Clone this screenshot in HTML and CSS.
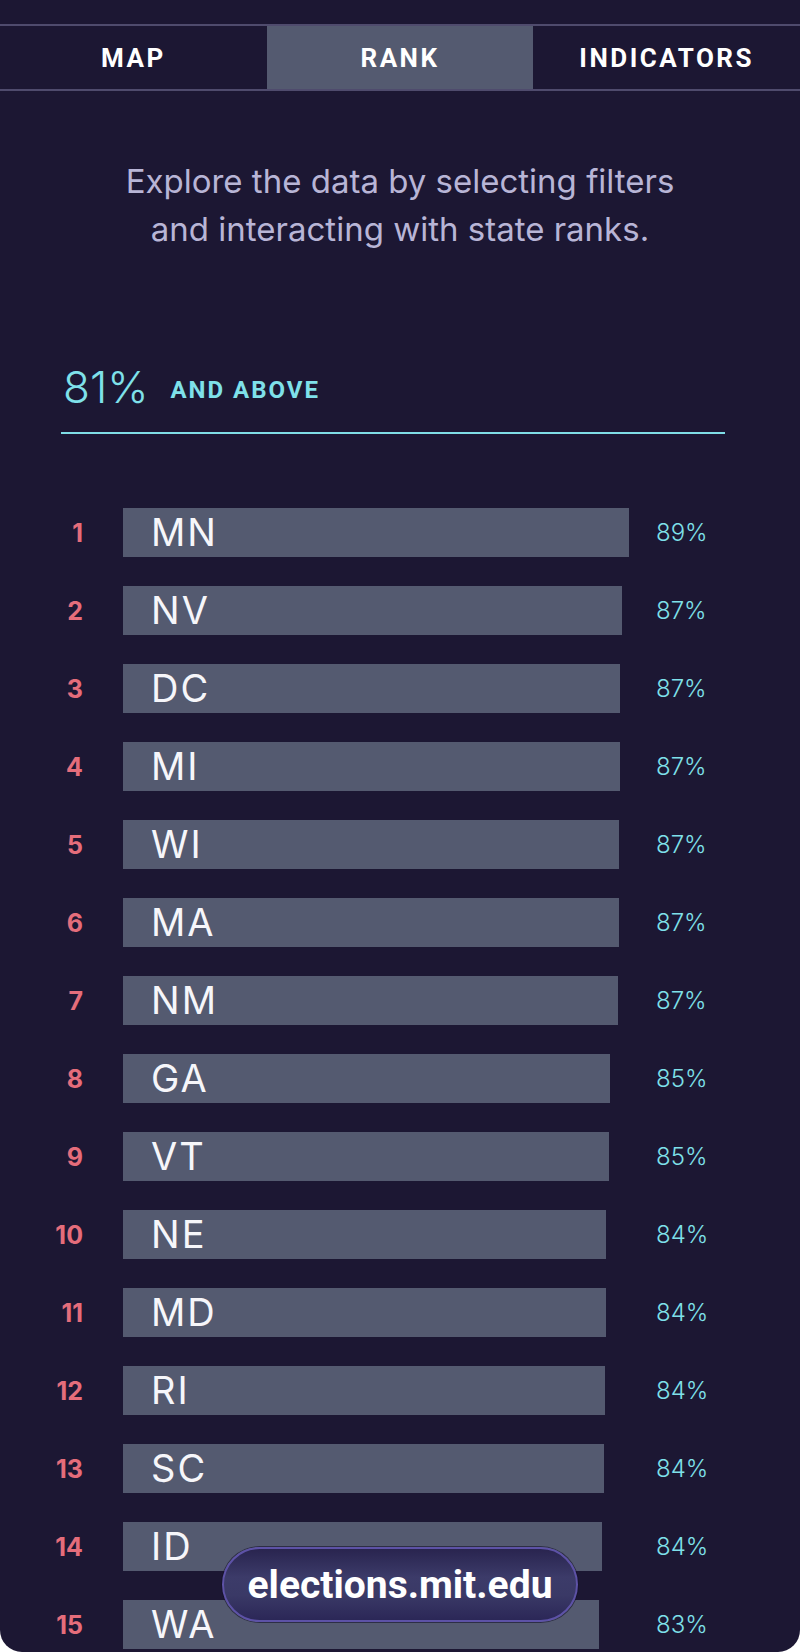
FILE: index.html
```html
<!DOCTYPE html>
<html lang="en">
<head>
    <meta charset="UTF-8">
    <meta name="viewport" content="width=device-width, initial-scale=1.0">
    <title>Rank</title>
    <link rel="stylesheet" href="styles.css">
</head>
<body>
    <div class="page">
        <nav class="tabs">
            <a class="tab">MAP</a>
            <a class="tab active">RANK</a>
            <a class="tab">INDICATORS</a>
        </nav>

        <p class="intro">Explore the data by selecting filters<br>and interacting with state ranks.</p>

        <h2 class="group-head"><span class="group-pct">81%</span><span class="group-label">AND ABOVE</span></h2>

        <ol class="rank-list">
            <li class="row"><span class="rank">1</span><div class="track"><div class="bar" style="width: 506px;">MN</div></div><span class="pct">89%</span></li>
            <li class="row"><span class="rank">2</span><div class="track"><div class="bar" style="width: 499px;">NV</div></div><span class="pct">87%</span></li>
            <li class="row"><span class="rank">3</span><div class="track"><div class="bar" style="width: 497px;">DC</div></div><span class="pct">87%</span></li>
            <li class="row"><span class="rank">4</span><div class="track"><div class="bar" style="width: 497px;">MI</div></div><span class="pct">87%</span></li>
            <li class="row"><span class="rank">5</span><div class="track"><div class="bar" style="width: 496px;">WI</div></div><span class="pct">87%</span></li>
            <li class="row"><span class="rank">6</span><div class="track"><div class="bar" style="width: 496px;">MA</div></div><span class="pct">87%</span></li>
            <li class="row"><span class="rank">7</span><div class="track"><div class="bar" style="width: 495px;">NM</div></div><span class="pct">87%</span></li>
            <li class="row"><span class="rank">8</span><div class="track"><div class="bar" style="width: 487px;">GA</div></div><span class="pct">85%</span></li>
            <li class="row"><span class="rank">9</span><div class="track"><div class="bar" style="width: 486px;">VT</div></div><span class="pct">85%</span></li>
            <li class="row"><span class="rank">10</span><div class="track"><div class="bar" style="width: 483px;">NE</div></div><span class="pct">84%</span></li>
            <li class="row"><span class="rank">11</span><div class="track"><div class="bar" style="width: 483px;">MD</div></div><span class="pct">84%</span></li>
            <li class="row"><span class="rank">12</span><div class="track"><div class="bar" style="width: 482px;">RI</div></div><span class="pct">84%</span></li>
            <li class="row"><span class="rank">13</span><div class="track"><div class="bar" style="width: 481px;">SC</div></div><span class="pct">84%</span></li>
            <li class="row"><span class="rank">14</span><div class="track"><div class="bar" style="width: 479px;">ID</div></div><span class="pct">84%</span></li>
            <li class="row"><span class="rank">15</span><div class="track"><div class="bar" style="width: 476px;">WA</div></div><span class="pct">83%</span></li>
        </ol>

        <div class="url-pill">elections.mit.edu</div>
    </div>
</body>
</html>
```

FILE: styles.css
```css
body {
    margin: 0;
    padding: 0;
    background-color: #fff;
    font-family: Inter, "Noto Sans", sans-serif;
}
.page {
    position: relative;
    height: 1652px;
    padding-top: 24px;
    box-sizing: border-box;
    background-color: #1c1733;
    border-radius: 0 0 22px 22px;
    overflow: hidden;
}
.tabs {
    display: grid;
    grid-template-columns: 1fr 1fr 1fr;
    height: 67px;
    border-top: 2px solid #4f4b6d;
    border-bottom: 2px solid #4f4b6d;
    box-sizing: border-box;
}
.tab {
    display: flex;
    align-items: center;
    justify-content: center;
    color: #fff;
    font-family: Roboto, sans-serif;
    font-weight: 700;
    font-size: 26px;
    letter-spacing: 2.5px;
    cursor: pointer;
}
.tab.active {
    background-color: #545a70;
}
.intro {
    margin: 66px 0 0;
    text-align: center;
    color: #b8b5d6;
    font-size: 33px;
    line-height: 48px;
}
.group-head {
    display: flex;
    align-items: center;
    height: 48px;
    margin: 110px 75px 0 61px;
    padding: 0 0 21px 2px;
    border-bottom: 2px solid #7fdde6;
    line-height: 48px;
    color: #7fe1ea;
}
.group-pct {
    font-size: 44px;
    font-weight: 300;
}
.group-label {
    margin-left: 22px;
    padding-top: 6px;
    font-family: Roboto, sans-serif;
    font-size: 24px;
    font-weight: 700;
    letter-spacing: 2px;
    line-height: 1;
}
.rank-list {
    list-style: none;
    margin: 74px 0 0;
    padding: 0;
}
.row {
    display: flex;
    align-items: center;
    height: 49px;
    margin-bottom: 29px;
}
.rank {
    width: 83px;
    text-align: right;
    color: #e56d7b;
    font-size: 25px;
    font-weight: 700;
}
.track {
    width: 533px;
    height: 49px;
    margin-left: 40px;
}
.bar {
    height: 49px;
    padding-left: 28px;
    box-sizing: border-box;
    background-color: #545a70;
    color: #f6f6fa;
    font-size: 38px;
    letter-spacing: 2px;
    line-height: 49px;
}
.pct {
    color: #7fe1ea;
    font-size: 24px;
    font-weight: 300;
}
.url-pill {
    position: absolute;
    left: 222px;
    top: 1547px;
    width: 356px;
    height: 75px;
    display: flex;
    align-items: center;
    justify-content: center;
    box-sizing: border-box;
    border: 2px solid #5d52a6;
    border-radius: 38px;
    background: linear-gradient(#29244f, #3c3b69 40%, #3a3966 65%, #2b2757);
    box-shadow: 0 0 0 1px rgba(20, 16, 40, 0.6);
    color: #fff;
    font-family: Roboto, sans-serif;
    font-size: 39px;
    font-weight: 700;
}
```
